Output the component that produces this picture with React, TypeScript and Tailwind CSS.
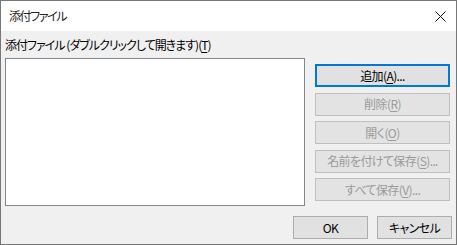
import React from 'react';

const font = "font-['Yu_Gothic_UI','Noto_Sans_CJK_JP',sans-serif] [font-feature-settings:'palt']";

const Btn = ({ children, disabled, primary, className = '' }: { children: React.ReactNode; disabled?: boolean; primary?: boolean; className?: string }) => (
  <button
    className={`flex items-center justify-center bg-[#e1e1e1] text-[12px] leading-none tracking-[-0.6px] ${
      primary
        ? 'border-2 border-[#0078d7] text-black'
        : disabled
        ? 'border border-[#bfbfbf] text-[#9a9a9a] bg-[#e3e3e3]'
        : 'border border-[#adadad] text-black'
    } ${className}`}
  >
    {children}
  </button>
);

const M = ({ c }: { c: string }) => <span className="underline underline-offset-[2px]">{c}</span>;

export default function App() {
  return (
    <div className={`w-[457px] h-[245px] border border-[#777] bg-[#f0f0f0] flex flex-col ${font}`}>
      {/* Title bar */}
      <div className="h-[30px] bg-white flex items-center justify-between pl-[8px] pr-[10px] shrink-0">
        <span className="text-[12px] text-[#222] tracking-[-1.4px]">添付ファイル</span>
        <svg width="11" height="11" viewBox="0 0 11 11">
          <path d="M0.5 0.5 L10.5 10.5 M10.5 0.5 L0.5 10.5" stroke="#111" strokeWidth="1" />
        </svg>
      </div>

      <div className="flex-1 flex flex-col pl-[4px] pr-[6px]">
        <div className="h-[27px] flex items-center text-[12px] text-black pt-[1px] tracking-[-1px]">
          添付ファイル (ダブルクリックして開きます)(<M c="T" />)
        </div>

        <div className="flex gap-[10px]">
          <div className="w-[300px] h-[148px] bg-white border border-[#82878f]" />
          <div className="flex flex-col gap-[5.5px] pt-[6px]">
            <Btn primary className="w-[135px] h-[23px]">追加(<M c="A" />)...</Btn>
            <Btn disabled className="w-[135px] h-[23px]">削除(<M c="R" />)</Btn>
            <Btn disabled className="w-[135px] h-[23px]">開く(<M c="O" />)</Btn>
            <Btn disabled className="w-[135px] h-[23px]">名前を付けて保存(<M c="S" />)...</Btn>
            <Btn disabled className="w-[135px] h-[23px]">すべて保存(<M c="V" />)...</Btn>
          </div>
        </div>

        <div className="flex justify-end gap-[9px] mt-[10px] -mr-[2px]">
          <Btn className="w-[75px] h-[23px]">OK</Btn>
          <Btn className="w-[75px] h-[23px]">キャンセル</Btn>
        </div>
      </div>
    </div>
  );
}
